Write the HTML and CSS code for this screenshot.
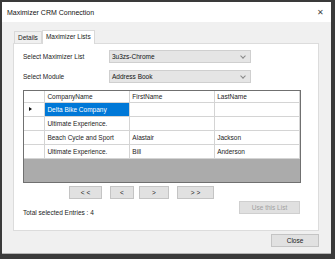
FILE: index.html
```html
<!DOCTYPE html>
<html lang="en">

<head>
    <meta charset="UTF-8">
    <title>Maximizer CRM Connection</title>
    <link rel="stylesheet" href="styles.css">
</head>

<body>
    <div class="window">
        <div class="titlebar">
            <span class="title">Maximizer CRM Connection</span>
            <span class="close-x">&#x2715;</span>
        </div>
        <div class="content">
            <div class="tabs">
                <div class="tab">Details</div>
                <div class="tab active">Maximizer Lists</div>
            </div>
            <div class="panel">
                <div class="field">
                    <label>Select Maximizer List</label>
                    <div class="combo">3u3zs-Chrome<span class="chev"></span></div>
                </div>
                <div class="field">
                    <label>Select Module</label>
                    <div class="combo">Address Book<span class="chev"></span></div>
                </div>
                <div class="grid">
                    <table>
                        <tr class="head">
                            <td class="rh"></td>
                            <td>CompanyName</td>
                            <td>FirstName</td>
                            <td>LastName</td>
                        </tr>
                        <tr>
                            <td class="rh"><span class="ptr"></span></td>
                            <td class="sel">Delta Bike Company</td>
                            <td></td>
                            <td></td>
                        </tr>
                        <tr>
                            <td class="rh"></td>
                            <td>Ultimate Experience.</td>
                            <td></td>
                            <td></td>
                        </tr>
                        <tr>
                            <td class="rh"></td>
                            <td>Beach Cycle and Sport</td>
                            <td>Alastair</td>
                            <td>Jackson</td>
                        </tr>
                        <tr>
                            <td class="rh"></td>
                            <td>Ultimate Experience.</td>
                            <td>Bill</td>
                            <td>Anderson</td>
                        </tr>
                    </table>
                </div>
                <div class="pager">
                    <button class="btn first">&lt; &lt;</button>
                    <button class="btn prev">&lt;</button>
                    <button class="btn next">&gt;</button>
                    <button class="btn last">&gt; &gt;</button>
                </div>
                <div class="footer">
                    <span class="total">Total selected Entries : 4</span>
                    <button class="btn use" disabled>Use this List</button>
                </div>
            </div>
            <div class="bottom">
                <button class="btn closebtn">Close</button>
            </div>
        </div>
    </div>
</body>

</html>
```

FILE: styles.css
```css
html,
body {
    margin: 0px;
    padding: 0px;
    background-color: #3a3a3a;
}

body {
    font-family: "Liberation Sans", Arial, sans-serif;
    font-size: 6.5px;
    color: #222;
}

.window {
    box-sizing: border-box;
    width: 335px;
    height: 259px;
    border-style: solid;
    border-color: #3a3a3a;
    border-width: 2px 4px 5px 2px;
    background-color: #f0f0f0;
    display: flex;
    flex-direction: column;
}

.titlebar {
    height: 20px;
    background-color: #fff;
    display: flex;
    align-items: center;
    justify-content: space-between;
    padding: 0px 7px 0px 5px;
    flex-shrink: 0;
}

.title {
    font-size: 7px;
    color: #111;
}

.close-x {
    font-size: 8px;
    color: #444;
}

.content {
    flex: 1;
    padding: 7px 0px 0px 11px;
    border-bottom: 1px solid #b5b5b5;
    display: flex;
    flex-direction: column;
}

.tabs {
    display: flex;
    align-items: flex-end;
    height: 14px;
    padding-left: 1px;
}

.tab {
    height: 12px;
    line-height: 12px;
    padding: 0px 3px;
    border: 1px solid #d9d9d9;
    border-bottom: none;
    background-color: #f0f0f0;
    box-sizing: border-box;
}

.tab.active {
    height: 14px;
    line-height: 12px;
    background-color: #fff;
    padding: 0px 3px;
    border-color: #d9d9d9;
    position: relative;
    top: 1px;
}

.panel {
    width: 306px;
    height: 188px;
    box-sizing: border-box;
    background-color: #fff;
    border: 1px solid #dcdcdc;
    padding: 6px 0px 0px 9px;
}

.field {
    display: flex;
    align-items: center;
    height: 13px;
    margin-bottom: 7px;
}

.field label {
    width: 86px;
}

.combo {
    box-sizing: border-box;
    width: 142px;
    height: 13px;
    line-height: 11px;
    background-color: #e5e5e5;
    border: 1px solid #cfcfcf;
    padding-left: 2px;
    position: relative;
    color: #111;
}

.chev {
    position: absolute;
    right: 5px;
    top: 3px;
    width: 3px;
    height: 3px;
    border-right: 1px solid #888;
    border-bottom: 1px solid #888;
    transform: rotate(45deg);
}

.grid {
    box-sizing: border-box;
    width: 278px;
    height: 93px;
    margin-top: 3px;
    background-color: #ababab;
    border: 1px solid #707070;
}

.grid table {
    border-collapse: collapse;
    table-layout: fixed;
}

.grid td {
    box-sizing: border-box;
    height: 14px;
    padding: 0px 2px;
    background-color: #fff;
    border: 1px solid #d4d4d4;
    white-space: nowrap;
    overflow: hidden;
    width: 85px;
}

.grid tr:first-child td {
    border-top: none;
}

.grid td:first-child {
    border-left: none;
}

.grid .head td {
    height: 11px;
    line-height: 9px;
}

.grid td.rh {
    width: 21px;
    position: relative;
}

.grid td.sel {
    background-color: #0078d7;
    color: #fff;
}

.ptr {
    position: absolute;
    left: 5px;
    top: 4px;
    border-left: 3px solid #111;
    border-top: 2px solid transparent;
    border-bottom: 2px solid transparent;
}

.btn {
    box-sizing: border-box;
    height: 13px;
    padding: 0px;
    margin: 0px;
    font-family: inherit;
    font-size: 6.5px;
    color: #222;
    background-color: #e1e1e1;
    border: 1px solid #c4c4c4;
}

.pager {
    display: flex;
    margin-top: 3px;
    padding-left: 46px;
}

.first {
    width: 33px;
}

.prev {
    width: 24px;
    margin-left: 8px;
}

.next {
    width: 30px;
    margin-left: 5px;
}

.last {
    width: 37px;
    margin-left: 8px;
}

.footer {
    display: flex;
    justify-content: space-between;
    align-items: flex-start;
    width: 277px;
    margin-top: 2px;
}

.total {
    margin-top: 8px;
}

.use {
    width: 61px;
    color: #a0a0a0;
    background-color: #e0e0e0;
    border-color: #cfcfcf;
}

.bottom {
    display: flex;
    justify-content: flex-end;
    padding: 3px 12px 0px 0px;
}

.closebtn {
    width: 48px;
}
```
